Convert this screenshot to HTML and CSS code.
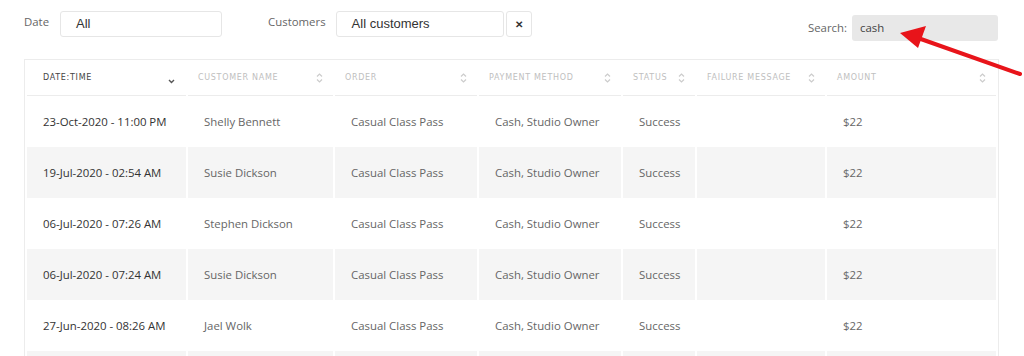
FILE: index.html
```html
<!DOCTYPE html>
<html lang="en">
<head>
  <meta charset="UTF-8">
  <title>Transactions</title>
  <link rel="stylesheet" href="styles.css">
</head>
<body>

  <div class="page">
    <div class="filters">
      <label class="flabel">Date</label>
      <div class="field field-date">All</div>
      <label class="flabel flabel-cust">Customers</label>
      <div class="field field-cust">All customers</div>
      <button class="clear">&#x2715;</button>
      <div class="search">
        <label class="flabel">Search:</label>
        <div class="search-box">cash</div>
      </div>
    </div>

    <table class="grid">
      <colgroup>
        <col class="c1"><col class="c2"><col class="c3"><col class="c4"><col class="c5"><col class="c6"><col class="c7">
      </colgroup>
      <thead>
        <tr>
          <th class="active">Date:Time <span class="sort"><svg width="7" height="5" viewBox="0 0 7 5"><path d="M1 1l2.5 2.5L6 1" fill="none" stroke="#555" stroke-width="1.4"/></svg></span></th>
          <th>Customer Name <span class="sort"><svg width="7" height="10" viewBox="0 0 7 10"><path d="M1 3.5l2.5-2.5L6 3.5M1 6.5l2.5 2.5L6 6.5" fill="none" stroke="#ccc" stroke-width="1.2"/></svg></span></th>
          <th>Order <span class="sort"><svg width="7" height="10" viewBox="0 0 7 10"><path d="M1 3.5l2.5-2.5L6 3.5M1 6.5l2.5 2.5L6 6.5" fill="none" stroke="#ccc" stroke-width="1.2"/></svg></span></th>
          <th>Payment Method <span class="sort"><svg width="7" height="10" viewBox="0 0 7 10"><path d="M1 3.5l2.5-2.5L6 3.5M1 6.5l2.5 2.5L6 6.5" fill="none" stroke="#ccc" stroke-width="1.2"/></svg></span></th>
          <th>Status <span class="sort"><svg width="7" height="10" viewBox="0 0 7 10"><path d="M1 3.5l2.5-2.5L6 3.5M1 6.5l2.5 2.5L6 6.5" fill="none" stroke="#ccc" stroke-width="1.2"/></svg></span></th>
          <th>Failure Message <span class="sort"><svg width="7" height="10" viewBox="0 0 7 10"><path d="M1 3.5l2.5-2.5L6 3.5M1 6.5l2.5 2.5L6 6.5" fill="none" stroke="#ccc" stroke-width="1.2"/></svg></span></th>
          <th>Amount <span class="sort"><svg width="7" height="10" viewBox="0 0 7 10"><path d="M1 3.5l2.5-2.5L6 3.5M1 6.5l2.5 2.5L6 6.5" fill="none" stroke="#ccc" stroke-width="1.2"/></svg></span></th>
        </tr>
      </thead>
      <tbody>
        <tr>
          <td class="when">23-Oct-2020 - 11:00 PM</td>
          <td>Shelly Bennett</td>
          <td>Casual Class Pass</td>
          <td>Cash, Studio Owner</td>
          <td>Success</td>
          <td></td>
          <td>$22</td>
        </tr>
        <tr>
          <td class="when">19-Jul-2020 - 02:54 AM</td>
          <td>Susie Dickson</td>
          <td>Casual Class Pass</td>
          <td>Cash, Studio Owner</td>
          <td>Success</td>
          <td></td>
          <td>$22</td>
        </tr>
        <tr>
          <td class="when">06-Jul-2020 - 07:26 AM</td>
          <td>Stephen Dickson</td>
          <td>Casual Class Pass</td>
          <td>Cash, Studio Owner</td>
          <td>Success</td>
          <td></td>
          <td>$22</td>
        </tr>
        <tr>
          <td class="when">06-Jul-2020 - 07:24 AM</td>
          <td>Susie Dickson</td>
          <td>Casual Class Pass</td>
          <td>Cash, Studio Owner</td>
          <td>Success</td>
          <td></td>
          <td>$22</td>
        </tr>
        <tr>
          <td class="when">27-Jun-2020 - 08:26 AM</td>
          <td>Jael Wolk</td>
          <td>Casual Class Pass</td>
          <td>Cash, Studio Owner</td>
          <td>Success</td>
          <td></td>
          <td>$22</td>
        </tr>
        <tr class="edge">
          <td></td><td></td><td></td><td></td><td></td><td></td><td></td>
        </tr>
      </tbody>
    </table>
  </div>

  <!-- annotation arrow pointing at the search box -->
  <svg class="arrow" width="134" height="60" viewBox="0 0 134 60">
    <line x1="132" y1="54" x2="30" y2="18" stroke="#e8141a" stroke-width="4" stroke-linecap="round"/>
    <polygon points="12,13 38,6 30,28" fill="#e8141a"/>
  </svg>

</body>
</html>
```

FILE: styles.css
```css
body {
  margin: 0;
  background: #fff;
  font-family: 'Open Sans', sans-serif;
  overflow: hidden;
}

.page {
  padding: 11px 26px 0 24px;
  height: 345px;
  overflow: hidden;
}

.filters {
  display: flex;
  align-items: flex-start;
  height: 48px;
}

.flabel {
  font-size: 11.4px;
  color: #666;
  line-height: 1;
  margin-top: 5px;
}

.flabel-cust {
  margin-left: 46px;
}

.field {
  box-sizing: border-box;
  height: 26px;
  border: 1px solid #e6e6e6;
  border-radius: 3px;
  font-family: 'Liberation Sans', Arial, sans-serif;
  font-size: 13px;
  color: #333;
  line-height: 24px;
  padding-left: 15px;
}

.field-date {
  width: 162px;
  margin-left: 11px;
}

.field-cust {
  width: 168px;
  margin-left: 10px;
}

.clear {
  box-sizing: border-box;
  width: 26px;
  height: 26px;
  margin-left: 2px;
  border: 1px solid #e6e6e6;
  border-radius: 3px;
  background: #fff;
  color: #333;
  font-size: 10px;
  font-weight: bold;
  padding: 0;
}

.search {
  margin-left: auto;
  display: flex;
  align-items: center;
  margin-top: 4px;
}

.search .flabel {
  margin-top: 0;
}

.search-box {
  box-sizing: border-box;
  width: 146px;
  height: 26px;
  margin-left: 5px;
  background: #e8e8e8;
  border-radius: 3px;
  font-size: 11.4px;
  color: #444;
  line-height: 26px;
  padding-left: 8px;
}

.grid {
  width: 975px;
  border: 1px solid #ececec;
  border-collapse: separate;
  border-spacing: 2px 0;
  table-layout: fixed;
}

.c1 { width: 159px; }
.c2 { width: 145px; }
.c3 { width: 142px; }
.c4 { width: 142px; }
.c5 { width: 72px; }
.c6 { width: 128px; }
.c7 { width: 169px; }

.grid th {
  box-sizing: border-box;
  height: 36px;
  text-align: left;
  font-family: 'DejaVu Sans', sans-serif;
  font-size: 8px;
  font-weight: normal;
  letter-spacing: 0.7px;
  text-transform: uppercase;
  color: #c0c0c0;
  border-bottom: 1px solid #ececec;
  padding: 0 10px;
  position: relative;
  white-space: nowrap;
}

.grid th.active {
  color: #444;
  padding-left: 16px;
}

.sort {
  position: absolute;
  right: 10px;
  top: 13px;
}

.grid th.active .sort {
  top: 17px;
  right: 11px;
}

.grid td {
  box-sizing: border-box;
  height: 51px;
  padding: 0 0 0 16px;
  font-size: 11.4px;
  color: #666;
  white-space: nowrap;
}

.grid tbody tr:nth-child(even) td {
  background: #f5f5f5;
}

.grid td.when {
  color: #333;
}

.arrow {
  position: absolute;
  left: 888px;
  top: 20px;
}
```
